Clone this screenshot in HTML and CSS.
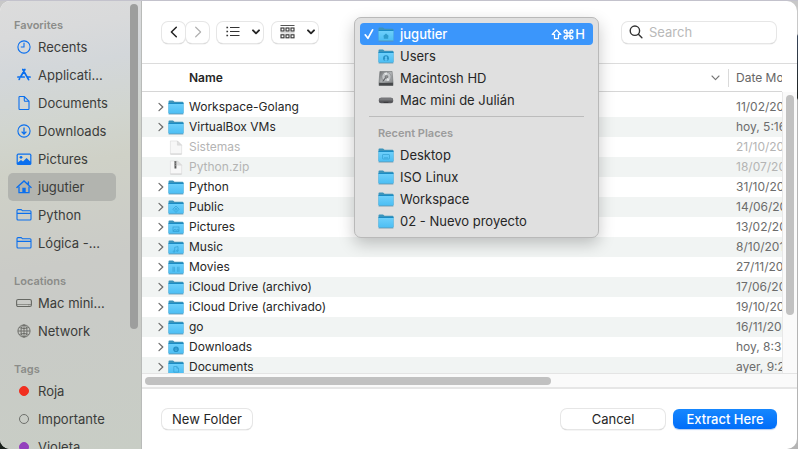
FILE: index.html
```html
<!DOCTYPE html>
<html lang="en">
<head>
<meta charset="utf-8">
<meta name="viewport" content="width=device-width, initial-scale=1">
<title>Extract</title>
<link rel="stylesheet" href="styles.css">
</head>
<body>
<svg class="defs" aria-hidden="true">
  <defs>
    <linearGradient id="folder-front" x1="0" y1="0" x2="0" y2="1">
      <stop offset="0" stop-color="#6fd0fb"/><stop offset="1" stop-color="#4abdf3"/>
    </linearGradient>
    <linearGradient id="disk-face" x1="0" y1="0" x2="1" y2="1">
      <stop offset="0" stop-color="#6d6f71"/><stop offset="0.5" stop-color="#b4b7b9"/><stop offset="1" stop-color="#77797b"/>
    </linearGradient>
    <symbol id="folder" viewBox="0 0 16 15">
      <path d="M.5 13V1.500Q.5.5 1.500.5H5l1.500 1.200h8q1 0 1 1V13z" fill="#3b94bb"/>
      <path d="M.5 3.600h15v9.700q0 .8-.8.8H1.300q-.8 0-.8-.8z" fill="url(#folder-front)"/>
      <path d="M.5 3.500h15" stroke="#1b8cc4" stroke-width="1"/>
      <path d="M.6 14h14.800" stroke="#5f93ab" stroke-width=".8"/>
    </symbol>
    <symbol id="chevron" viewBox="0 0 6 10"><path d="M1 1.400 4.800 5 1 8.600" fill="none" stroke="#6c6c6c" stroke-width="1.300" stroke-linecap="round" stroke-linejoin="round"/></symbol>
    <symbol id="down" viewBox="0 0 8 6"><path d="M1 1.300 4 4.300 7 1.300" fill="none" stroke="currentColor" stroke-width="1.900" stroke-linecap="round" stroke-linejoin="round"/></symbol>
    <symbol id="side-folder" viewBox="0 0 16 16"><path d="M1 12V3.600q0-1 1-1h3.200l1.300 1.200H14q1 0 1 1V12q0 1-1 1H2q-1 0-1-1zM1 6.400h14" fill="none" stroke="#0a6fee" stroke-width="1.100"/></symbol>
    <symbol id="page" viewBox="0 0 16 16">
      <path d="M2 1h7.500L14 5.500V15H2z" fill="#f7f7f7" stroke="#dcdcdc" stroke-width=".7"/>
      <path d="M9.500 1v4.500H14z" fill="#dedede" stroke="#cfcfcf" stroke-width=".5"/>
      <path d="M2 15h12" stroke="#c8c8c8" stroke-width=".8"/>
    </symbol>
  </defs>
</svg>

<main class="window">
  <aside class="sidebar">
    <nav class="places" aria-label="Places">
      <h2>Favorites</h2>
      <ul>
        <li><a href="#"><svg viewBox="0 0 16 16"><g fill="none" stroke="#0a6fee" stroke-width="1.1"><circle cx="8" cy="8" r="6.1"/><path d="M8 3.7V8H4.8"/></g></svg>Recents</a></li>
        <li><a href="#"><svg viewBox="0 0 16 16"><g fill="none" stroke="#0a6fee" stroke-width="1.7" stroke-linecap="round"><path d="M8.9 2.5 4.5 10M3.2 12.4l.4-.7M6.8 2.5l5.8 10.2M1.9 10h6.3M11.8 10h2.3"/></g></svg>Applicati...</a></li>
        <li><a href="#"><svg viewBox="0 0 16 16"><path d="M3 2.2q0-.7.7-.7h4.6L13 6.2v7.6q0 .7-.7.7H3.7q-.7 0-.7-.7zM8.3 1.5v4q0 .7.7.7h4" fill="none" stroke="#0a6fee" stroke-width="1.1"/></svg>Documents</a></li>
        <li><a href="#"><svg viewBox="0 0 16 16"><g fill="none" stroke="#0a6fee" stroke-width="1.1"><circle cx="8" cy="8" r="6.1"/><path d="M8 4.500v6.400M5.600 8.600 8 11l2.400-2.400" stroke-width="1.3"/></g></svg>Downloads</a></li>
        <li><a href="#"><svg viewBox="0 0 16 16"><rect x=".6" y="2.6" width="14.8" height="11.4" rx="1.6" fill="#0a6fee"/><path d="M1.800 3.800h12.400v6.600L10.600 7 7 10.600l-2-1.500-3.200 2.400z" fill="#d2d5cb"/><circle cx="5" cy="6.300" r="1.400" fill="#0a6fee"/></svg>Pictures</a></li>
        <li><a href="#" class="current" aria-current="page"><svg viewBox="0 0 16 16"><path d="M.9 8.400 8 2l7.100 6.400M12.400 3v3" fill="none" stroke="#0a6fee" stroke-width="1.4" stroke-linecap="round"/><path d="M3 7.400v6.200h10V7.400" fill="none" stroke="#0a6fee" stroke-width="1.3"/><path d="M6.300 8.800h3.400V14H6.300z" fill="#0a6fee"/></svg>jugutier</a></li>
        <li><a href="#"><svg><use href="#side-folder"/></svg>Python</a></li>
        <li><a href="#"><svg><use href="#side-folder"/></svg>Lógica -...</a></li>
      </ul>
      <h2>Locations</h2>
      <ul>
        <li><a href="#"><svg viewBox="0 0 16 16"><rect x=".6" y="4.5" width="14.8" height="7" rx="1.6" fill="none" stroke="#666863" stroke-width="1.1"/><path d="M1 9.500h14M12.200 10h1.300" stroke="#666863" stroke-width=".6"/></svg>Mac mini...</a></li>
        <li><a href="#"><svg viewBox="0 0 16 16"><g fill="none" stroke="#666863" stroke-width=".9"><circle cx="8" cy="8" r="6.1"/><ellipse cx="8" cy="8" rx="3" ry="6.1"/><path d="M8 2v12M2 8h12M3.200 4.600q4.800 2 9.600 0M3.200 11.400q4.800-2 9.600 0"/></g></svg>Network</a></li>
      </ul>
      <h2>Tags</h2>
      <ul>
        <li><a href="#"><span class="tag red"></span>Roja</a></li>
        <li><a href="#"><span class="tag"></span>Importante</a></li>
        <li><a href="#"><span class="tag purple"></span>Violeta</a></li>
      </ul>
    </nav>
    <div class="side-scroll"></div>
  </aside>

  <section class="content">
    <header class="toolbar">
      <div class="history">
        <button type="button" aria-label="Back"><svg width="8" height="12" viewBox="0 0 8 12"><path d="M6.300 1.200 1.400 6l4.900 4.800" fill="none" stroke="#222" stroke-width="1.5" stroke-linecap="round" stroke-linejoin="round"/></svg></button>
        <button type="button" aria-label="Forward"><svg width="8" height="12" viewBox="0 0 8 12"><path d="M1.700 1.200 6.600 6l-4.900 4.800" fill="none" stroke="#b0b0b0" stroke-width="1.2" stroke-linecap="round" stroke-linejoin="round"/></svg></button>
      </div>
      <button type="button" class="view" aria-label="List view" aria-haspopup="true">
        <svg width="14" height="12" viewBox="0 0 14 12"><path d="M4 1.500h9.500M4 5.500h9.500M4 9.500h9.500" stroke="#333" stroke-width="1.2"/><path d="M.4 1.500h1.700M.4 5.500h1.700M.4 9.500h1.700" stroke="#333" stroke-width="1.600"/></svg>
        <svg width="8" height="6"><use href="#down"/></svg>
      </button>
      <button type="button" class="view" aria-label="Group items" aria-haspopup="true">
        <svg width="15" height="14" viewBox="0 0 15 14"><path d="M.5.5h14" stroke="#555" stroke-width="1"/><g fill="none" stroke="#333" stroke-width="1.100"><rect x="1" y="3" width="3" height="3"/><rect x="6" y="3" width="3" height="3"/><rect x="11" y="3" width="3" height="3"/><rect x="1" y="9.800" width="3" height="3"/><rect x="6" y="9.800" width="3" height="3"/><rect x="11" y="9.800" width="3" height="3"/></g><path d="M.5 7.900h14" stroke="#aaa" stroke-width=".7"/></svg>
        <svg width="8" height="6"><use href="#down"/></svg>
      </button>
      <label class="search">
        <svg width="14" height="14" viewBox="0 0 14 14"><g fill="none" stroke="#333" stroke-width="1.400" stroke-linecap="round"><circle cx="5.900" cy="5.700" r="4.700"/><path d="m9.400 9.300 3.500 3.500"/></g></svg>
        <input type="search" placeholder="Search" aria-label="Search">
      </label>
    </header>

    <div class="browser">
      <div class="files">
        <table>
          <thead>
            <tr><th scope="col"><div class="name-head">Name<svg width="9" height="6" viewBox="0 0 9 6"><path d="m1 1 3.500 3.700L8 1" fill="none" stroke="#777" stroke-width="1.100" stroke-linecap="round" stroke-linejoin="round"/></svg></div></th><th scope="col" class="date"><div>Date Modified</div></th></tr>
          </thead>
          <tbody>
            <tr><td><div class="file"><svg class="twist"><use href="#chevron"/></svg><svg class="icon"><use href="#folder"/></svg>Workspace-Golang</div></td><td>11/02/2020</td></tr>
            <tr><td><div class="file"><svg class="twist"><use href="#chevron"/></svg><svg class="icon"><use href="#folder"/></svg>VirtualBox VMs</div></td><td>hoy, 5:16</td></tr>
            <tr class="off"><td><div class="file"><svg class="twist"></svg><svg class="icon"><use href="#page"/></svg>Sistemas</div></td><td>21/10/2020</td></tr>
            <tr class="off"><td><div class="file"><svg class="twist"></svg><svg class="icon" viewBox="0 0 16 16"><use href="#page"/><path d="M7.400 1v8" stroke="#555" stroke-width="2"/><path d="M7.400 1.500v6" stroke="#aaa" stroke-width=".8" stroke-dasharray="1 1"/></svg>Python.zip</div></td><td>18/07/2020</td></tr>
            <tr><td><div class="file"><svg class="twist"><use href="#chevron"/></svg><svg class="icon"><use href="#folder"/></svg>Python</div></td><td>31/10/2020</td></tr>
            <tr><td><div class="file"><svg class="twist"><use href="#chevron"/></svg><svg class="icon" viewBox="0 0 16 15"><use href="#folder"/><path d="m8 6 3.200 3.200L8 12.400 4.800 9.200z" class="mark"/><circle cx="8" cy="9.200" r="1" class="mark"/></svg>Public</div></td><td>14/06/2020</td></tr>
            <tr><td><div class="file"><svg class="twist"><use href="#chevron"/></svg><svg class="icon" viewBox="0 0 16 15"><use href="#folder"/><rect x="5" y="7" width="6" height="4.500" class="mark"/><path d="m5 11 2-2 1.500 1L10 9l1 2z" class="mark"/></svg>Pictures</div></td><td>13/02/2020</td></tr>
            <tr><td><div class="file"><svg class="twist"><use href="#chevron"/></svg><svg class="icon" viewBox="0 0 16 15"><use href="#folder"/><path d="M6.700 11.500V7.300L10 6.600v4.200" class="mark"/><circle cx="6" cy="11.500" r=".8" class="mark"/><circle cx="9.300" cy="10.800" r=".8" class="mark"/></svg>Music</div></td><td>8/10/2019</td></tr>
            <tr><td><div class="file"><svg class="twist"><use href="#chevron"/></svg><svg class="icon" viewBox="0 0 16 15"><use href="#folder"/><path d="M5 6.800v5M6.300 6.800v5M9.700 6.800v5M11 6.800v5" class="mark"/></svg>Movies</div></td><td>27/11/2020</td></tr>
            <tr><td><div class="file"><svg class="twist"><use href="#chevron"/></svg><svg class="icon"><use href="#folder"/></svg>iCloud Drive (archivo)</div></td><td>17/06/2020</td></tr>
            <tr><td><div class="file"><svg class="twist"><use href="#chevron"/></svg><svg class="icon"><use href="#folder"/></svg>iCloud Drive (archivado)</div></td><td>19/10/2020</td></tr>
            <tr><td><div class="file"><svg class="twist"><use href="#chevron"/></svg><svg class="icon"><use href="#folder"/></svg>go</div></td><td>16/11/2020</td></tr>
            <tr><td><div class="file"><svg class="twist"><use href="#chevron"/></svg><svg class="icon" viewBox="0 0 16 15"><use href="#folder"/><circle cx="8" cy="9.200" r="2.800" fill="#2590c4"/><path d="M8 7.700v3M7 9.700l1 1 1-1" fill="none" stroke="#55bdef" stroke-width=".7"/></svg>Downloads</div></td><td>hoy, 8:31</td></tr>
            <tr><td><div class="file"><svg class="twist"><use href="#chevron"/></svg><svg class="icon" viewBox="0 0 16 15"><use href="#folder"/><path d="M5.800 6.500h3l1.700 1.700v4H5.800zM8.800 6.500v1.700h1.700" class="mark"/></svg>Documents</div></td><td>ayer, 9:21</td></tr>
          </tbody>
        </table>
      </div>
      <div class="v-scroll"><div class="thumb"></div></div>
    </div>
    <div class="h-scroll"><div class="thumb"></div></div>

    <footer class="actions">
      <button type="button" class="push new">New Folder</button>
      <button type="button" class="push">Cancel</button>
      <button type="button" class="push primary">Extract Here</button>
    </footer>

    <div class="menu" role="menu" aria-label="Path">
      <button type="button" role="menuitem" class="chosen"><svg class="check" viewBox="0 0 10 12"><path d="m1.200 6.800 2.700 3.500L8.600 1.800" fill="none" stroke="#fff" stroke-width="1.700" stroke-linecap="round" stroke-linejoin="round"/></svg><svg class="icon" viewBox="0 0 16 15"><use href="#folder"/><path d="m4.900 9.200 3.100-2.700 3.100 2.700h-.9v2.600H5.800V9.200z" fill="#2f9ccd"/></svg>jugutier<span class="keys"><svg width="11" height="11" viewBox="0 0 11 11"><path d="M5.500 1 1.200 5.400h2.300v4.200h4V5.400h2.300z" fill="none" stroke="#fff" stroke-width="1.300" stroke-linejoin="round"/></svg><svg width="11" height="11" viewBox="0 0 11 11"><path d="M4 4V2.600A1.500 1.500 0 1 0 2.500 4h6A1.500 1.500 0 1 0 7 2.600v5.800A1.500 1.500 0 1 0 8.500 7h-6A1.500 1.500 0 1 0 4 8.400z" fill="none" stroke="#fff" stroke-width="1.300"/></svg>H</span></button>
      <button type="button" role="menuitem"><svg class="icon" viewBox="0 0 16 15"><use href="#folder"/><circle cx="8" cy="9.200" r="2.900" fill="#2590c4"/><path d="M8 7.300a1.100 1.100 0 0 1 .7 2q.8.5.8 2.400h-3q0-1.900.8-2.400a1.100 1.100 0 0 1 .7-2z" fill="#5fc5f6"/></svg>Users</button>
      <button type="button" role="menuitem"><svg class="icon" viewBox="0 0 16 16"><path d="M1.500.5h13l1 12v3H.5v-3z" fill="url(#disk-face)" stroke="#6a6c6e" stroke-width=".6"/><path d="M.6 12.600h14.800v2.900H.6z" fill="#46484a"/><circle cx="8.500" cy="6.200" r="4.900" fill="#c3c6c8" stroke="#85878a" stroke-width=".7"/><path d="M8.500 6.200 6 2.200a4.800 4.800 0 0 1 3-.7zM8.500 6.200l3.500 3.300a4.800 4.800 0 0 1-2.500 1.400z" fill="#e4e6e7"/><circle cx="8.500" cy="6.200" r="1.500" fill="#909294" stroke="#5c5e60" stroke-width=".6"/><path d="m4.500 11.200 3-4" stroke="#55575a" stroke-width="1.100"/></svg>Macintosh HD</button>
      <button type="button" role="menuitem"><svg class="icon" viewBox="0 0 16 16"><rect x=".3" y="5" width="15.400" height="6" rx="2.400" fill="#56565a"/><path d="M2.500 5h11q1.500 0 2 3H.5q.5-3 2-3z" fill="#77787b"/><path d="M5.500 10h5" stroke="#38383a"/></svg>Mac mini de Julián</button>
      <hr>
      <h2>Recent Places</h2>
      <button type="button" role="menuitem"><svg class="icon" viewBox="0 0 16 15"><use href="#folder"/><rect x="4.500" y="6.500" width="7" height="4.500" rx=".5" class="mark"/><path d="M6 9.800h4" class="mark"/></svg>Desktop</button>
      <button type="button" role="menuitem"><svg class="icon"><use href="#folder"/></svg>ISO Linux</button>
      <button type="button" role="menuitem"><svg class="icon"><use href="#folder"/></svg>Workspace</button>
      <button type="button" role="menuitem"><svg class="icon"><use href="#folder"/></svg>02 - Nuevo proyecto</button>
    </div>
  </section>
</main>
</body>
</html>
```
FILE: styles.css
```css
* { box-sizing: border-box; }

body {
  margin: 0;
  height: 100vh;
  padding: 1px 1px 0 0;
  overflow: hidden;
  display: flex;
  font-family: Inter, "Noto Sans", sans-serif;
  font-size: 12px;
  line-height: 16px;
  color: #262626;
  background:
    linear-gradient(#c3c2cc, #c3c2cc) top / 100% 1px no-repeat,
    linear-gradient(#1a211b, #1a211b) bottom left / 12px 12px no-repeat,
    linear-gradient(#c8c8c8 0 34px, #39465a 36px, #1c211f 98px, #b4b4b4 100px);
}

button, input { font: inherit; color: inherit; }
h2, ul { margin: 0; padding: 0; }
ul { list-style: none; }
svg { flex: none; display: block; }
.defs { position: absolute; width: 0; height: 0; }

.window {
  flex: 1;
  min-width: 0;
  display: flex;
  border-radius: 10px;
  overflow: hidden;
  background: #fff;
}

/* Sidebar */
.sidebar {
  flex: none;
  width: 142px;
  display: flex;
  padding-left: 8px;
  border-right: 1px solid #b9bbb9;
  background: linear-gradient(170deg, #dcdcdc 0, #d9dadb 8%, #d3d7da 16%, #d1d5cf 28%, #cfd1c7 37%, #cacbc7 58%, #c9cbc7 70%, #c8cdc5 100%);
}
.places { flex: 1; padding-top: 16px; max-width: 108px; }
.places h2, .menu h2 {
  font-size: 11px;
  font-weight: 600;
  color: #8b8c89;
}
.places h2 { padding-left: 6px; }
.places ul { margin-bottom: 16px; }
.places a {
  display: flex;
  align-items: center;
  gap: 6px;
  height: 28px;
  padding-left: 8px;
  border-radius: 5px;
  font-size: 13px;
  color: #3b3c3a;
  text-decoration: none;
  white-space: nowrap;
}
.places svg { width: 16px; height: 16px; }
.places .current { background: #b2b4af; }
.tag {
  width: 10px;
  height: 10px;
  margin: 0 3px;
  border: 1px solid #6e706c;
  border-radius: 50%;
}
.red { background: #f12f20; border-color: #f12f20; }
.purple { background: #9440bd; border-color: #9440bd; }
.side-scroll {
  width: 8px;
  height: 325px;
  margin: 3px 3px 0 auto;
  border-radius: 4px;
  background: #9d9e9d;
}

/* Main column */
.content {
  position: relative;
  flex: 1;
  min-width: 0;
  display: flex;
  flex-direction: column;
}
.toolbar {
  display: flex;
  align-items: center;
  gap: 8px;
  height: 63px;
  padding: 0 21px 0 20px;
  border-bottom: 1px solid #dcdcdc;
}
.history { display: flex; gap: 1px; }
.toolbar button, .search, .push {
  display: flex;
  align-items: center;
  justify-content: center;
  height: 21px;
  padding: 0;
  border: 0;
  border-radius: 6px;
  background: #fff;
  box-shadow: 0 0 0 1px #e6e6e6, 0 1px 1px #9c9c9c;
}
.history button { width: 23px; }
.toolbar .view { width: 46px; gap: 12px; margin-right: 1px; padding-left: 5px; }
.search {
  width: 154px;
  margin-left: auto;
  justify-content: flex-start;
  gap: 6px;
  padding: 0 7px;
}
.search input {
  min-width: 0;
  flex: 1;
  padding: 0;
  border: 0;
  outline: 0;
  background: none;
  font-size: 13px;
}
.search input::placeholder { color: #b9b9b9; opacity: 1; }

/* File list */
.browser { display: flex; flex: 1; min-height: 0; }
.files { flex: 1; min-width: 0; overflow: hidden; }
table {
  width: calc(100% + 60px);
  table-layout: fixed;
  border-collapse: separate;
  border-spacing: 0;
}
th, td { padding: 0; text-align: left; white-space: nowrap; }
th { height: 28px; border-bottom: 1px solid #d6d6d6; font-weight: 600; }
.name-head {
  display: flex;
  align-items: center;
  justify-content: space-between;
  padding: 0 8px 0 47px;
}
.date { width: 114px; font-weight: 400; color: #666; }
.date div { border-left: 1px solid #dadada; padding-left: 7px; line-height: 18px; }
tbody::before { content: ""; display: table-row; height: 5px; }
td { height: 20px; }
td + td { padding-left: 8px; color: #6c6c6c; }
tbody tr:nth-child(even) { background: #f1f4f3; }
.file { display: flex; align-items: center; padding-left: 16px; }
.twist { width: 6px; height: 10px; margin-right: 4px; }
.icon { width: 16px; height: 15px; margin-right: 5px; }
.mark { fill: none; stroke: #33a0d3; stroke-width: .7px; }
.off td, .off td + td { color: #b4b4b4; }

.v-scroll {
  width: 15px;
  margin-top: 28px;
  padding: 3px;
  border-left: 1px solid #e8e8e8;
  background: #fafafa;
}
.v-scroll .thumb { width: 8px; height: 220px; border-radius: 4px; background: #c1c1c1; }
.h-scroll {
  height: 16px;
  padding: 3px;
  border-top: 1px solid #e4e4e4;
  border-bottom: 2px solid #e6e6e6;
  background: #fafafa;
}
.h-scroll .thumb { width: 406px; height: 8px; border-radius: 4px; background: #c1c1c1; }

/* Footer */
.actions {
  display: flex;
  align-items: center;
  gap: 8px;
  height: 60px;
  padding: 0 20px;
}
.push { width: 104px; height: 20px; font-size: 13px; }
.new { width: 90px; margin-right: auto; }
.primary {
  color: #fff;
  background: linear-gradient(#1687fe, #006df9);
  box-shadow: 0 1px 1px #b5cdf0;
  font-weight: 500;
}

/* Path menu */
.menu {
  position: absolute;
  top: 16px;
  left: 212px;
  width: 245px;
  padding: 5px;
  border: 1px solid #b9b9b9;
  border-radius: 7px;
  background: #e0e0e0;
  box-shadow: 0 6px 16px rgba(0, 0, 0, .22);
}
.menu button {
  display: flex;
  align-items: center;
  width: 100%;
  height: 22px;
  padding: 0 8px 0 18px;
  border: 0;
  border-radius: 4px;
  background: none;
  font-size: 13px;
  text-align: left;
}
.menu .icon { margin-right: 6px; }
.menu .chosen { padding-left: 4px; color: #fff; background: #3b96fb; font-weight: 500; }
.check { width: 10px; height: 12px; margin-right: 4px; }
.keys { display: flex; align-items: center; gap: 1px; margin-left: auto; }
.menu hr { height: 1px; margin: 5px 9px; border: 0; background: #bcbcbc; }
.menu h2 { padding: 3px 18px; color: #9b9b9b; }
```
